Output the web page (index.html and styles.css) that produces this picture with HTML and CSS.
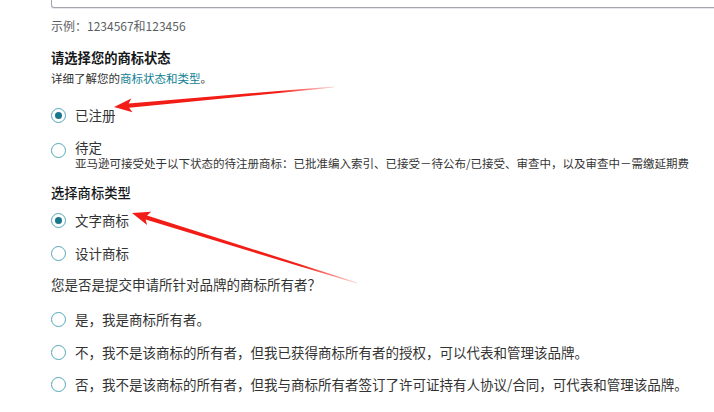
FILE: index.html
```html
<!DOCTYPE html>
<html lang="zh-CN">
<head>
<meta charset="utf-8">
<title>商标状态</title>
<link rel="stylesheet" href="styles.css">
</head>
<body>
<div class="page">
  <div class="input-box"></div>
  <div class="hint">示例：1234567和123456</div>

  <div class="heading h-status">请选择您的商标状态</div>
  <div class="desc">详细了解您的<a class="link" href="#">商标状态和类型</a>。</div>

  <div class="radio r-registered"><span class="dot on"></span><span class="label">已注册</span></div>
  <div class="radio radio-top r-pending">
    <span class="dot"></span>
    <div class="label-col">
      <div class="label lbl-pending">待定</div>
      <div class="sub">亚马逊可接受处于以下状态的待注册商标：已批准编入索引、已接受－待公布/已接受、审查中，以及审查中－需缴延期费</div>
    </div>
  </div>

  <div class="heading h-type">选择商标类型</div>
  <div class="radio r-word"><span class="dot on"></span><span class="label">文字商标</span></div>
  <div class="radio r-design"><span class="dot"></span><span class="label">设计商标</span></div>

  <div class="question">您是否是提交申请所针对品牌的商标所有者？</div>
  <div class="radio r-own1"><span class="dot"></span><span class="label">是，我是商标所有者。</span></div>
  <div class="radio r-own2"><span class="dot"></span><span class="label">不，我不是该商标的所有者，但我已获得商标所有者的授权，可以代表和管理该品牌。</span></div>
  <div class="radio r-own3"><span class="dot"></span><span class="label">否，我不是该商标的所有者，但我与商标所有者签订了许可证持有人协议/合同，可代表和管理该品牌。</span></div>
</div>

<svg class="arrows" width="714" height="412" viewBox="0 0 714 412" aria-hidden="true">
  <defs>
    <linearGradient id="g1" gradientUnits="userSpaceOnUse" x1="114" y1="107" x2="334" y2="87">
      <stop offset="0" stop-color="#f21d16"/>
      <stop offset="0.75" stop-color="#f21d16"/>
      <stop offset="1" stop-color="#f21d16" stop-opacity="0.15"/>
    </linearGradient>
    <linearGradient id="g2" gradientUnits="userSpaceOnUse" x1="132" y1="213" x2="357" y2="283">
      <stop offset="0" stop-color="#f21d16"/>
      <stop offset="0.75" stop-color="#f21d16"/>
      <stop offset="1" stop-color="#f21d16" stop-opacity="0.15"/>
    </linearGradient>
  </defs>
  <polygon fill="url(#g1)" points="114,107 131.3,98.4 128.7,103.4 334,86.4 334,87.6 129.1,107.8 132.5,112.3"/>
  <polygon fill="url(#g2)" points="132,213 151.3,211.7 147.0,215.4 357.2,282.4 356.8,283.6 145.6,219.6 147.1,225.0"/>
</svg>
</body>
</html>
```

FILE: styles.css
```css
html, body {
  margin: 0;
  padding: 0;
  background: #ffffff;
}
body {
  position: relative;
  width: 714px;
  height: 412px;
  overflow: hidden;
  font-family: "Noto Sans CJK SC", "Noto Sans", sans-serif;
  color: #333333;
}
.page {
  padding-left: 51px;
}
.input-box {
  height: 7px;
  border: 1px solid #a3a7ad;
  border-top: none;
  border-right: none;
  border-radius: 0 0 0 3px;
  box-shadow: 0 1px 0 #e4e8ee;
}
.hint {
  margin-top: 9px;
  font-size: 12px;
  line-height: 18px;
  color: #5b5f63;
}
.heading {
  font-size: 13.3px;
  line-height: 18px;
  color: #16181a;
}
.h-status {
  margin-top: 14px;
  font-weight: 700;
}
.h-type {
  margin-top: 14px;
  font-weight: 500;
}
.desc {
  margin-top: 2px;
  font-size: 11.5px;
  line-height: 18px;
  color: #333333;
}
.link {
  color: #0f7f92;
  text-decoration: none;
}
.question {
  margin-top: 12px;
  font-size: 13.5px;
  line-height: 18px;
  color: #333333;
}
.radio {
  display: flex;
  align-items: center;
  gap: 9px;
  height: 20px;
  font-size: 13.5px;
  line-height: 20px;
  color: #333333;
  white-space: nowrap;
}
.radio-top {
  align-items: flex-start;
  height: auto;
}
.radio-top .dot {
  margin-top: 2.5px;
}
.dot {
  flex: 0 0 auto;
  position: relative;
  width: 15px;
  height: 15px;
  box-sizing: border-box;
  border: 1.6px solid #55a6b8;
  border-radius: 50%;
  background: #ffffff;
}
.dot.on::after {
  content: "";
  position: absolute;
  left: 50%;
  top: 50%;
  width: 7px;
  height: 7px;
  margin: -3.5px 0 0 -3.5px;
  border-radius: 50%;
  background: #17788b;
}
.label-col {
  display: flex;
  flex-direction: column;
}
.lbl-pending {
  font-size: 13.5px;
  line-height: 15px;
}
.sub {
  margin-top: 1px;
  font-size: 11.5px;
  line-height: 14px;
  color: #333333;
}
.r-registered { margin-top: 18px; }
.r-pending { margin-top: 15px; }
.r-word { margin-top: 8px; }
.r-design { margin-top: 13px; }
.r-own1 { margin-top: 16px; }
.r-own2 { margin-top: 13px; }
.r-own3 { margin-top: 12px; }
.arrows {
  position: absolute;
  left: 0;
  top: 0;
  pointer-events: none;
}
```
